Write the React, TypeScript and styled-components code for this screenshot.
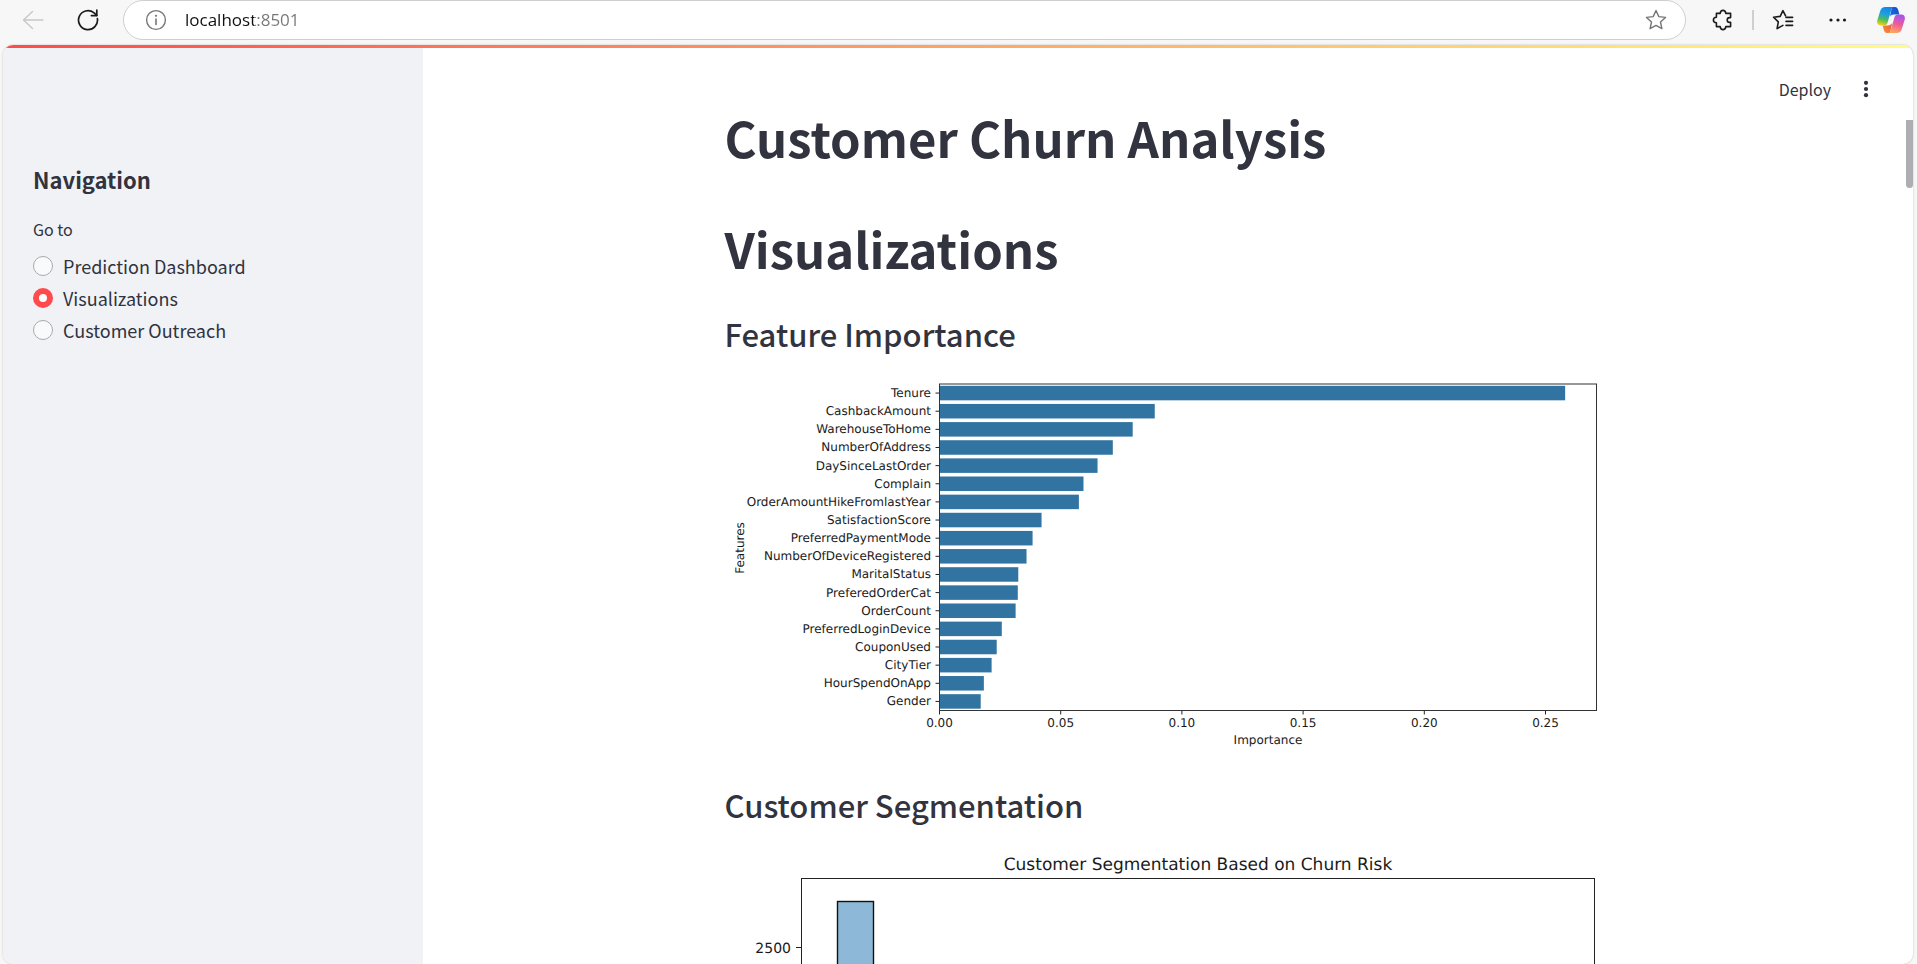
import React, { useState } from 'react';
import styled, { createGlobalStyle } from 'styled-components';

const uiFont = `'Noto Sans CJK JP', 'Noto Sans CJK SC', 'Noto Sans', sans-serif`;
const ink = '#31333f';

const GlobalStyle = createGlobalStyle`
  *, *::before, *::after { box-sizing: border-box; }
  body { margin: 0; background: #f7f7f7; color: ${ink}; font-family: ${uiFont}; }
  h1, h2, h3 { margin: 0; }
`;

const Browser = styled.div`
  display: flex;
  flex-direction: column;
  height: 100vh;
  overflow: hidden;
`;

const Toolbar = styled.header`
  display: flex;
  align-items: center;
  flex: none;
  height: 40px;
  padding: 0 12px 0 19px;
`;

const IconButton = styled.button<{ $gap?: number; $color?: string }>`
  display: grid;
  place-items: center;
  flex: none;
  width: 28px;
  height: 28px;
  margin: 0 0 0 ${(p) => p.$gap ?? 0}px;
  padding: 0;
  border: 0;
  background: none;
  color: ${(p) => p.$color ?? '#1b1b1b'};
`;

const AddressBar = styled.div`
  display: flex;
  flex: 1;
  align-items: center;
  gap: 15px;
  height: 40px;
  margin-left: 21px;
  padding: 0 15px 0 18px;
  border: 1px solid #cfcfcf;
  border-radius: 20px;
  background: #fff;
`;

const AddressInput = styled.input`
  flex: 1;
  min-width: 0;
  height: 28px;
  padding: 0 0 2px;
  border: 0;
  outline: 0;
  color: transparent;
  background: linear-gradient(90deg, #111 69px, #767676 69px);
  background-clip: text;
  -webkit-background-clip: text;
  font: 17px 'Open Sans', sans-serif;
`;

const ToolbarDivider = styled.span`
  width: 2px;
  height: 20px;
  margin-left: 15px;
  background: #cfcfcf;
`;

const PageFrame = styled.div`
  position: relative;
  display: flex;
  flex-direction: column;
  flex: 1;
  min-height: 0;
  margin: 5px 4px 0 3px;
  overflow: hidden;
  border-radius: 10px;
  background: #fff;
  box-shadow: 0 0 2px rgba(0, 0, 0, 0.25);
`;

const Decoration = styled.div`
  flex: none;
  height: 3px;
  background: linear-gradient(90deg, #ff4b4b, #fffd80);
`;

const AppBody = styled.div`
  display: flex;
  flex: 1;
  min-height: 0;
`;

const Sidebar = styled.aside`
  flex: none;
  width: 420px;
  padding: 116px 30px 0;
  background: #f0f2f6;
`;

const SidebarTitle = styled.h2`
  font-size: 22px;
  font-weight: 600;
  line-height: 30px;
`;

const RadioSet = styled.fieldset`
  display: flex;
  flex-direction: column;
  margin: 22px 0 0;
  padding: 0;
  border: 0;
`;

const RadioLegend = styled.legend`
  margin-bottom: 8px;
  padding: 0;
  font-size: 16px;
  line-height: 26px;
`;

const RadioLabel = styled.label`
  display: flex;
  align-items: center;
  gap: 10px;
  height: 32px;
  font-size: 18px;
`;

const Radio = styled.input`
  appearance: none;
  width: 20px;
  height: 20px;
  margin: 0;
  border: 1px solid #a8a9af;
  border-radius: 50%;
  background: #fafafc;
  &:checked {
    border: 6px solid #ff4b4b;
    background: #fff;
  }
`;

const Main = styled.main`
  flex: 1;
  min-width: 0;
  padding-right: 7px;
  overflow: hidden;
`;

const Content = styled.div`
  display: flex;
  flex-direction: column;
  max-width: 920px;
  margin: 0 auto;
  padding: 56px 20px 0;
`;

const PageTitle = styled.h1`
  padding-bottom: 45px;
  font-size: 49px;
  font-weight: 700;
  line-height: 66px;
  &:nth-of-type(2) {
    padding-bottom: 32px;
  }
`;

const SectionTitle = styled.h3`
  padding-bottom: 20px;
  font-size: 31px;
  font-weight: 500;
  line-height: 42px;
`;

const Chart = styled.svg`
  display: block;
  width: 100%;
  height: auto;
  margin-bottom: 29px;
  font-family: 'DejaVu Sans', sans-serif;
  text-rendering: geometricPrecision;
  fill: #1a1a1a;
`;

const AppActions = styled.div`
  position: absolute;
  top: 30px;
  right: 33px;
  display: flex;
  align-items: center;
  gap: 21px;
`;

const DeployButton = styled.button`
  padding: 0;
  border: 0;
  background: none;
  color: ${ink};
  font: 16px/28px ${uiFont};
`;

const ScrollThumb = styled.div`
  position: absolute;
  top: 75px;
  right: 0;
  width: 7px;
  height: 68px;
  border-radius: 0 0 4px 4px;
  background: #adadb2;
`;

const stroke = {
  fill: 'none',
  stroke: 'currentColor',
  strokeWidth: 1.4,
  strokeLinecap: 'round' as const,
  strokeLinejoin: 'round' as const,
};

const BackIcon = () => (
  <svg width="22" height="22" viewBox="0 0 22 22" {...stroke}>
    <path d="M21 11H1.5M10.5 2.5 1.5 11l9 8.5" />
  </svg>
);

const ReloadIcon = () => (
  <svg width="22" height="22" viewBox="0 0 22 22" {...stroke} strokeWidth={1.7}>
    <path d="M20.4 9.6A9.5 9.5 0 1 1 16.8 3.6L19.8 6.4" />
    <path d="M19.8 1.2v5.4h-5.4" />
  </svg>
);

const InfoIcon = () => (
  <svg width="22" height="22" viewBox="0 0 22 22" {...stroke}>
    <circle cx="11" cy="11" r="9.4" />
    <path d="M11 10v5.4" strokeWidth="1.6" />
    <circle cx="11" cy="6.8" r="1.1" fill="currentColor" stroke="none" />
  </svg>
);

const StarIcon = () => (
  <svg width="22" height="22" viewBox="0 0 22 22" {...stroke}>
    <path d="M11 1.5 13.8 7.6l6.7.8-5 4.6 1.4 6.6L11 16.4l-5.9 3.2L6.5 13l-5-4.6 6.7-.8Z" />
  </svg>
);

const ExtensionsIcon = () => (
  <svg width="22" height="22" viewBox="0 0 22 22" {...stroke} strokeWidth={1.6}>
    <path d="M4.4 4.4H8.2C8.4 2.4 9.4 1.4 11 1.4s2.6 1 2.8 3h4.8v4.2h-1a2.4 2.4 0 0 0 0 4.8h1v4.2h-4.8c-.2 2-1.2 3-2.8 3s-2.6-1-2.8-3H4.4v-3.8c-2-.2-3-1.2-3-2.8s1-2.6 3-2.8Z" />
  </svg>
);

const FavoritesIcon = () => (
  <svg width="22" height="22" viewBox="0 0 22 22" {...stroke} strokeWidth={1.6}>
    <path d="M13.6 6.8 10.9 1.6 8.2 7.4l-6.7.8 4.8 4.6-1.2 6.8 5.8-3.2" />
    <path d="M14 8.4h6.6M14 12.4h6.6M14 16.4h6.6" />
  </svg>
);

const MoreIcon = () => (
  <svg width="22" height="22" viewBox="0 0 22 22" fill="currentColor">
    <circle cx="4" cy="11" r="1.6" />
    <circle cx="11" cy="11" r="1.6" />
    <circle cx="17.5" cy="11" r="1.6" />
  </svg>
);

const KebabIcon = () => (
  <svg width="20" height="20" viewBox="0 0 20 20" fill="currentColor">
    <circle cx="10" cy="3.8" r="2.1" />
    <circle cx="10" cy="10" r="2.1" />
    <circle cx="10" cy="16.2" r="2.1" />
  </svg>
);

const lobe =
  'M8.5 0H17C15 .4 14.4 2.4 13.8 4.6L10.6 15.4C10 17.6 8.8 18.4 7 18.4H3.6C.6 18.4-.4 16 .3 13.2L3.2 4C4 1.2 5.6 0 8.5 0Z';
const foldShape = 'M15 0H18C19.6 0 20.6 1 21.2 3L22.4 7.6H17C15.2 7.6 13.8 8.4 12.8 10Z';

const CopilotIcon = () => (
  <svg width="28" height="26" viewBox="0 0 28 26">
    <defs>
      <linearGradient id="cool" x1="0.6" y1="0" x2="0.35" y2="1">
        <stop offset="0" stopColor="#1687e0" />
        <stop offset="0.35" stopColor="#1a9be8" />
        <stop offset="0.7" stopColor="#4dbd5e" />
        <stop offset="1" stopColor="#f2cf12" />
      </linearGradient>
      <linearGradient id="warm" x1="0.35" y1="1" x2="0.6" y2="0">
        <stop offset="0" stopColor="#a255ee" />
        <stop offset="0.5" stopColor="#ec5a9c" />
        <stop offset="1" stopColor="#ffa75c" />
      </linearGradient>
      <linearGradient id="fold" x1="0" y1="1" x2="1" y2="0">
        <stop offset="0" stopColor="#1976e6" />
        <stop offset="1" stopColor="#1b44c8" />
      </linearGradient>
      <linearGradient id="ember" x1="0" y1="1" x2="1" y2="0">
        <stop offset="0" stopColor="#f0553f" />
        <stop offset="1" stopColor="#f5953a" />
      </linearGradient>
    </defs>
    <path d={foldShape} fill="url(#fold)" />
    <path d={foldShape} fill="url(#ember)" transform="rotate(180 14 13)" />
    <path d={lobe} fill="url(#cool)" />
    <path d={lobe} fill="url(#warm)" transform="rotate(180 14 13)" />
  </svg>
);

const features: [string, number][] = [
  ['Tenure', 0.2581],
  ['CashbackAmount', 0.0888],
  ['WarehouseToHome', 0.0797],
  ['NumberOfAddress', 0.0715],
  ['DaySinceLastOrder', 0.0652],
  ['Complain', 0.0594],
  ['OrderAmountHikeFromlastYear', 0.0575],
  ['SatisfactionScore', 0.0421],
  ['PreferredPaymentMode', 0.0384],
  ['NumberOfDeviceRegistered', 0.0359],
  ['MaritalStatus', 0.0325],
  ['PreferedOrderCat', 0.0323],
  ['OrderCount', 0.0314],
  ['PreferredLoginDevice', 0.0257],
  ['CouponUsed', 0.0236],
  ['CityTier', 0.0215],
  ['HourSpendOnApp', 0.0183],
  ['Gender', 0.017],
];

const plot = { left: 214.5, right: 871.5, top: 9, bottom: 335.5 };
const rowPitch = (plot.bottom - plot.top) / features.length;
const unit = 121.2 / 0.05;
const ticks = [0, 0.05, 0.1, 0.15, 0.2, 0.25];

const ImportanceChart = () => (
  <Chart viewBox="0 0 880 380" role="img" aria-label="Feature importance">
    {features.map(([name, value], i) => {
      const mid = plot.top + rowPitch * (i + 0.5);
      return (
        <g key={name}>
          <rect x={plot.left} y={mid - rowPitch * 0.4} width={value * unit} height={rowPitch * 0.8} fill="#3274a1" />
          <path d={`M${plot.left - 4} ${mid}H${plot.left}`} stroke="#222" />
          <text x="206" y={mid + 4} fontSize="12" textAnchor="end">{name}</text>
        </g>
      );
    })}
    {ticks.map((t) => (
      <g key={t}>
        <path d={`M${plot.left + t * unit} ${plot.bottom}v4`} stroke="#222" />
        <text x={plot.left + t * unit} y="352" fontSize="12" textAnchor="middle">{t.toFixed(2)}</text>
      </g>
    ))}
    <rect
      x={plot.left}
      y={plot.top}
      width={plot.right - plot.left}
      height={plot.bottom - plot.top}
      fill="none"
      stroke="#333"
    />
    <text x="543" y="369" fontSize="12" textAnchor="middle">Importance</text>
    <text transform="translate(19 173) rotate(-90)" fontSize="12" textAnchor="middle">Features</text>
  </Chart>
);

const SegmentationChart = () => (
  <Chart viewBox="0 0 880 540" role="img" aria-label="Customer segmentation">
    <text x="473" y="24" fontSize="17" textAnchor="middle">Customer Segmentation Based on Churn Risk</text>
    <rect x="112.5" y="55.5" width="36" height="446" fill="#8eb8d8" stroke="#111" strokeWidth="1.4" />
    <rect x="76.5" y="32.5" width="793" height="469" fill="none" stroke="#222" />
    <path d="M71 101.5H76.5" stroke="#222" />
    <text x="66" y="107" fontSize="14" textAnchor="end">2500</text>
  </Chart>
);

const pages = ['Prediction Dashboard', 'Visualizations', 'Customer Outreach'];

export default function App() {
  const [page, setPage] = useState('Visualizations');
  const [url, setUrl] = useState('localhost:8501');

  return (
    <>
      <GlobalStyle />
      <Browser>
        <Toolbar>
          <IconButton aria-label="Back" $color="#c8c8c8"><BackIcon /></IconButton>
          <IconButton aria-label="Refresh" $gap={27}><ReloadIcon /></IconButton>
          <AddressBar>
            <IconButton aria-label="Site information" $color="#767676"><InfoIcon /></IconButton>
            <AddressInput aria-label="Address" value={url} onChange={(e) => setUrl(e.target.value)} />
            <IconButton aria-label="Add to favorites" $color="#767676"><StarIcon /></IconButton>
          </AddressBar>
          <IconButton aria-label="Extensions" $gap={23}><ExtensionsIcon /></IconButton>
          <ToolbarDivider />
          <IconButton aria-label="Favorites" $gap={15}><FavoritesIcon /></IconButton>
          <IconButton aria-label="Settings and more" $gap={27}><MoreIcon /></IconButton>
          <IconButton aria-label="Copilot" $gap={25}><CopilotIcon /></IconButton>
        </Toolbar>
        <PageFrame>
          <Decoration />
          <AppBody>
            <Sidebar>
              <SidebarTitle>Navigation</SidebarTitle>
              <RadioSet>
                <RadioLegend>Go to</RadioLegend>
                {pages.map((name) => (
                  <RadioLabel key={name}>
                    <Radio type="radio" name="page" checked={page === name} onChange={() => setPage(name)} />
                    {name}
                  </RadioLabel>
                ))}
              </RadioSet>
            </Sidebar>
            <Main>
              <Content>
                <PageTitle>Customer Churn Analysis</PageTitle>
                <PageTitle>Visualizations</PageTitle>
                <SectionTitle>Feature Importance</SectionTitle>
                <ImportanceChart />
                <SectionTitle>Customer Segmentation</SectionTitle>
                <SegmentationChart />
              </Content>
            </Main>
          </AppBody>
          <AppActions>
            <DeployButton>Deploy</DeployButton>
            <IconButton aria-label="Main menu" $color={ink}><KebabIcon /></IconButton>
          </AppActions>
          <ScrollThumb />
        </PageFrame>
      </Browser>
    </>
  );
}
